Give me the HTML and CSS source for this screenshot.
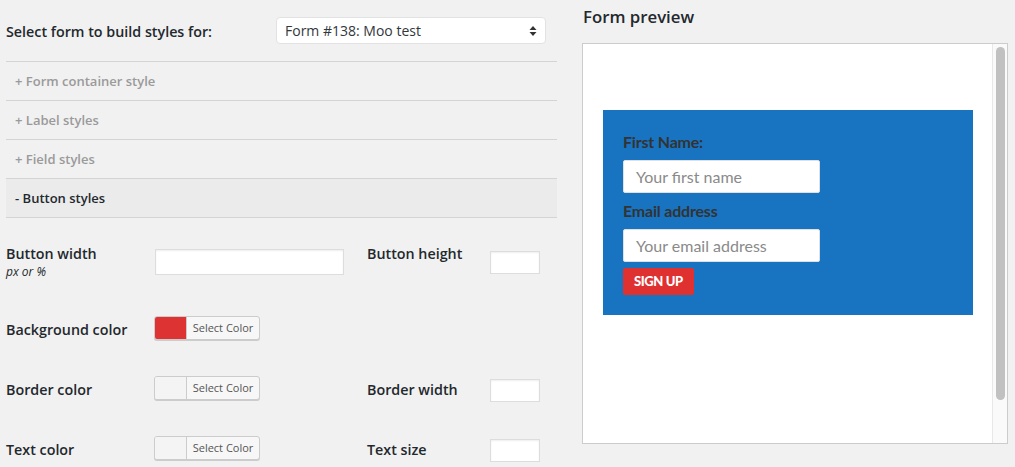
FILE: index.html
```html
<!DOCTYPE html>
<html lang="en">
  <head>
    <meta charset="UTF-8" />
    <title>Form styles</title>
    <link rel="stylesheet" href="styles.css">
  </head>
  <body>
    <div class="builder">
      <div class="builder-settings">
        <div class="form-select-row">
          <label class="form-select-label">Select form to build styles for:</label>
          <div class="form-select">
            <span>Form #138: Moo test</span>
            <svg class="select-arrows" width="8" height="12" viewBox="0 0 8 12">
              <path d="M4 1 L7.5 5 L0.5 5 Z" fill="#333"/>
              <path d="M4 11 L7.5 7 L0.5 7 Z" fill="#333"/>
            </svg>
          </div>
        </div>

        <div class="accordion">
          <div class="accordion-item">+ Form container style</div>
          <div class="accordion-item">+ Label styles</div>
          <div class="accordion-item">+ Field styles</div>
          <div class="accordion-item active">- Button styles</div>
        </div>

        <div class="fields">
          <div class="field-row first">
            <div class="field-label">
              Button width
              <small>px or %</small>
            </div>
            <div class="field-control">
              <input class="text-input wide" type="text">
            </div>
            <div class="field-label second">Button height</div>
            <div class="field-control second">
              <input class="text-input small" type="text">
            </div>
          </div>

          <div class="field-row">
            <div class="field-label">Background color</div>
            <div class="field-control">
              <div class="color-picker">
                <span class="swatch red"></span>
                <span class="swatch-label">Select Color</span>
              </div>
            </div>
          </div>

          <div class="field-row">
            <div class="field-label">Border color</div>
            <div class="field-control">
              <div class="color-picker">
                <span class="swatch"></span>
                <span class="swatch-label">Select Color</span>
              </div>
            </div>
            <div class="field-label second">Border width</div>
            <div class="field-control second">
              <input class="text-input small" type="text">
            </div>
          </div>

          <div class="field-row">
            <div class="field-label">Text color</div>
            <div class="field-control">
              <div class="color-picker">
                <span class="swatch"></span>
                <span class="swatch-label">Select Color</span>
              </div>
            </div>
            <div class="field-label second">Text size</div>
            <div class="field-control second">
              <input class="text-input small" type="text">
            </div>
          </div>
        </div>
      </div>

      <div class="builder-preview">
        <h3>Form preview</h3>
        <div class="preview-frame">
          <div class="preview-content">
            <div class="signup-form">
              <label>First Name:</label>
              <div class="signup-input">Your first name</div>
              <label>Email address</label>
              <div class="signup-input">Your email address</div>
              <div class="signup-button">Sign up</div>
            </div>
          </div>
          <div class="scrollbar">
            <div class="scrollbar-thumb"></div>
          </div>
        </div>
      </div>
    </div>
  </body>
</html>
```

FILE: styles.css
```css
body {
  margin: 0;
  background-color: #f1f1f1;
  font-family: "Open Sans", sans-serif;
  color: #23282d;
}
.builder {
  display: flex;
}
.builder-settings {
  width: 551px;
  margin-left: 6px;
}
.form-select-row {
  display: flex;
  align-items: center;
  height: 61px;
}
.form-select-label {
  width: 270px;
  font-size: 14.3px;
  font-weight: 600;
  padding-top: 2px;
}
.form-select {
  display: flex;
  align-items: center;
  justify-content: space-between;
  box-sizing: border-box;
  width: 270px;
  height: 27px;
  padding: 0 8px 0 8px;
  background: white;
  border: 1px solid #e2e2e2;
  border-radius: 4px;
  font-size: 14px;
  color: #32373c;
}
.accordion-item {
  height: 38px;
  line-height: 38px;
  border-top: 1px solid #d4d4d4;
  padding-left: 9px;
  font-size: 13px;
  font-weight: 600;
  color: #9a9a9a;
}
.accordion-item.active {
  background: #ebebeb;
  color: #23282d;
  border-bottom: 1px solid #d4d4d4;
}
.fields {
  padding-top: 27px;
}
.field-row {
  display: flex;
  align-items: flex-start;
  height: 60px;
}
.field-row.first {
  height: 71px;
}
.field-label {
  flex: none;
  width: 148px;
  padding-top: 5px;
  font-size: 14.3px;
  font-weight: 600;
  line-height: 18px;
}
.field-label.second {
  width: 123px;
}
.field-row.first .field-label {
  padding-top: 0;
}
.field-label small {
  display: block;
  font-size: 12px;
  font-weight: 400;
  font-style: italic;
}
.field-control {
  flex: none;
  width: 213px;
}
.field-control.second {
  width: auto;
}
.text-input {
  box-sizing: border-box;
  background: white;
  border: 1px solid #dddddd;
  box-shadow: inset 0 1px 2px rgba(0, 0, 0, 0.07);
  padding: 0;
  margin: 0;
}
.text-input.wide {
  width: 189px;
  height: 26px;
  margin-left: 1px;
  margin-top: 4px;
}
.text-input.small {
  width: 50px;
  height: 23px;
  margin-top: 3px;
}
.field-row.first .text-input.small {
  margin-top: 6px;
}
.color-picker {
  display: flex;
  box-sizing: border-box;
  width: 106px;
  height: 24px;
  border: 1px solid #cccccc;
  border-radius: 3px;
  box-shadow: 0 1px 0 #cccccc;
  background: #f7f7f7;
  overflow: hidden;
}
.swatch {
  width: 31px;
  background: #f4f4f4;
  border-right: 1px solid #cccccc;
}
.swatch.red {
  background: #dd3333;
}
.swatch-label {
  flex: 1;
  text-align: center;
  font-size: 11px;
  line-height: 22px;
  color: #555555;
}
.builder-preview {
  margin-left: 25px;
}
.builder-preview h3 {
  margin: 6px 0 15px 1px;
  font-size: 16.8px;
  font-weight: 600;
  line-height: 22px;
}
.preview-frame {
  display: flex;
  width: 424px;
  height: 399px;
  background: white;
  border: 1px solid #cccccc;
}
.preview-content {
  flex: 1;
  padding: 66px 0 0 20px;
}
.signup-form {
  width: 330px;
  height: 165px;
  padding: 20px;
  background: #1874c1;
  font-family: Lato, sans-serif;
}
.signup-form label {
  display: block;
  margin: 2px 0 8px 0;
  font-size: 16px;
  font-weight: 700;
  line-height: 20px;
  color: #333333;
  letter-spacing: -0.2px;
}
.signup-form label + .signup-input + label {
  margin-top: 8px;
}
.signup-input {
  box-sizing: border-box;
  width: 197px;
  height: 33px;
  padding-left: 12px;
  background: white;
  border: 1px solid #e0e0e0;
  border-radius: 2px;
  font-size: 16px;
  line-height: 31px;
  color: #8a8a8a;
}
.signup-button {
  display: inline-block;
  margin-top: 6px;
  height: 27px;
  padding: 0 11px;
  background: #e03131;
  border-radius: 2px;
  color: white;
  font-size: 13px;
  font-weight: 900;
  line-height: 27px;
  text-transform: uppercase;
  letter-spacing: -0.4px;
}
.scrollbar {
  width: 14px;
  background: #fafafa;
  border-left: 1px solid #e8e8e8;
}
.scrollbar-thumb {
  width: 9px;
  height: 353px;
  margin: 3px 0 0 3px;
  background: #c1c1c1;
  border-radius: 5px;
}
```
